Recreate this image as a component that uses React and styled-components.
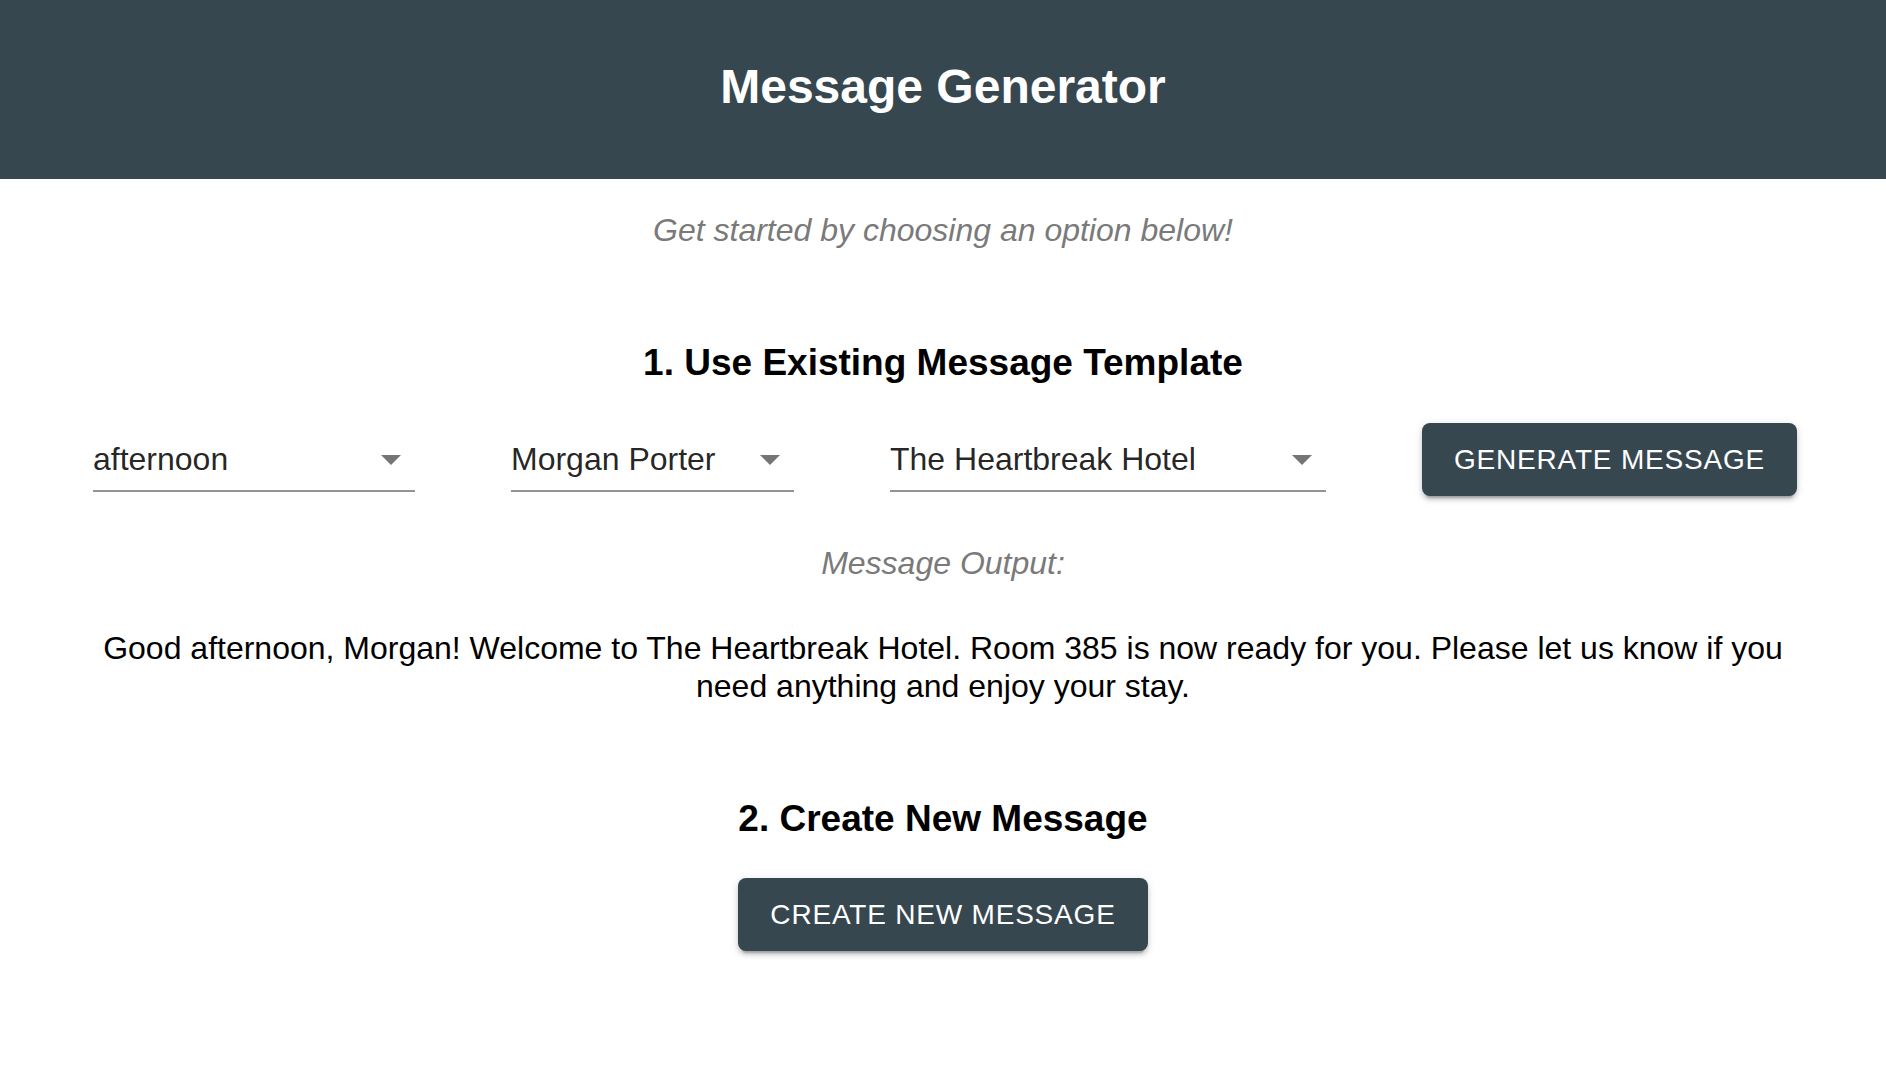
import React from "react";
import styled, { createGlobalStyle } from "styled-components";

const GlobalStyle = createGlobalStyle`
  body {
    margin: 0;
    background: #fff;
    font-family: "Liberation Sans", Arial, sans-serif;
  }
`;

const Page = styled.div`
  display: flex;
  flex-direction: column;
  align-items: center;
  min-height: 100vh;
  text-align: center;
`;

const Header = styled.header`
  width: 100%;
  height: 179px;
  box-sizing: border-box;
  padding-bottom: 6px;
  background: #37474f;
  display: flex;
  align-items: center;
  justify-content: center;
`;

const Title = styled.h1`
  margin: 0;
  color: #fff;
  font-size: 48px;
  font-weight: 700;
  line-height: 1.2;
`;

const Hint = styled.p`
  margin: ${(p) => p.$top}px 0 0;
  color: #7a7a7a;
  font-size: 32px;
  font-style: italic;
  line-height: 48px;
`;

const SectionTitle = styled.h2`
  margin: ${(p) => p.$top}px 0 0;
  color: #000;
  font-size: 37px;
  font-weight: 700;
  line-height: 44px;
`;

const Row = styled.div`
  margin-top: 38px;
  padding-left: 4px;
  display: flex;
  align-items: center;
  justify-content: center;
  gap: 96px;
`;

const Select = styled.div`
  width: ${(p) => p.$width}px;
  box-sizing: border-box;
  display: flex;
  align-items: center;
  padding: 8px 0 7px;
  border-bottom: 2px solid #949494;
  cursor: pointer;
`;

const SelectValue = styled.span`
  flex: 1;
  text-align: left;
  font-size: 32px;
  line-height: 46px;
  color: rgba(0, 0, 0, 0.87);
  white-space: nowrap;
`;

const Arrow = styled.svg`
  width: 48px;
  height: 48px;
  flex-shrink: 0;
  fill: #757575;
`;

const Button = styled.button`
  margin-top: ${(p) => p.$top || 0}px;
  padding: 12px 32px;
  border: none;
  border-radius: 8px;
  background: #37474f;
  color: #fff;
  font-family: "Liberation Sans", Arial, sans-serif;
  font-size: 28px;
  line-height: 49px;
  letter-spacing: 0.8px;
  text-transform: uppercase;
  white-space: nowrap;
  cursor: pointer;
  box-shadow: 0px 6px 2px -4px rgba(0, 0, 0, 0.2),
    0px 4px 4px 0px rgba(0, 0, 0, 0.14), 0px 2px 10px 0px rgba(0, 0, 0, 0.12);
`;

const Output = styled.p`
  margin: 42px auto 0;
  max-width: 1720px;
  color: #000;
  font-size: 32px;
  line-height: 38px;
`;

const Dropdown = ({ value, width }) => (
  <Select $width={width}>
    <SelectValue>{value}</SelectValue>
    <Arrow viewBox="0 0 24 24">
      <path d="M7 10l5 5 5-5z" />
    </Arrow>
  </Select>
);

const App = () => {
  return (
    <Page>
      <GlobalStyle />
      <Header>
        <Title>Message Generator</Title>
      </Header>
      <Hint $top={27}>Get started by choosing an option below!</Hint>

      <SectionTitle $top={87}>1. Use Existing Message Template</SectionTitle>
      <Row>
        <Dropdown value="afternoon" width={322} />
        <Dropdown value="Morgan Porter" width={283} />
        <Dropdown value="The Heartbreak Hotel" width={436} />
        <Button>Generate Message</Button>
      </Row>
      <Hint $top={43}>Message Output:</Hint>
      <Output>
        Good afternoon, Morgan! Welcome to The Heartbreak Hotel. Room 385 is
        now ready for you. Please let us know if you need anything and enjoy
        your stay.
      </Output>

      <SectionTitle $top={92}>2. Create New Message</SectionTitle>
      <Button $top={37}>Create New Message</Button>
    </Page>
  );
};

export default App;
